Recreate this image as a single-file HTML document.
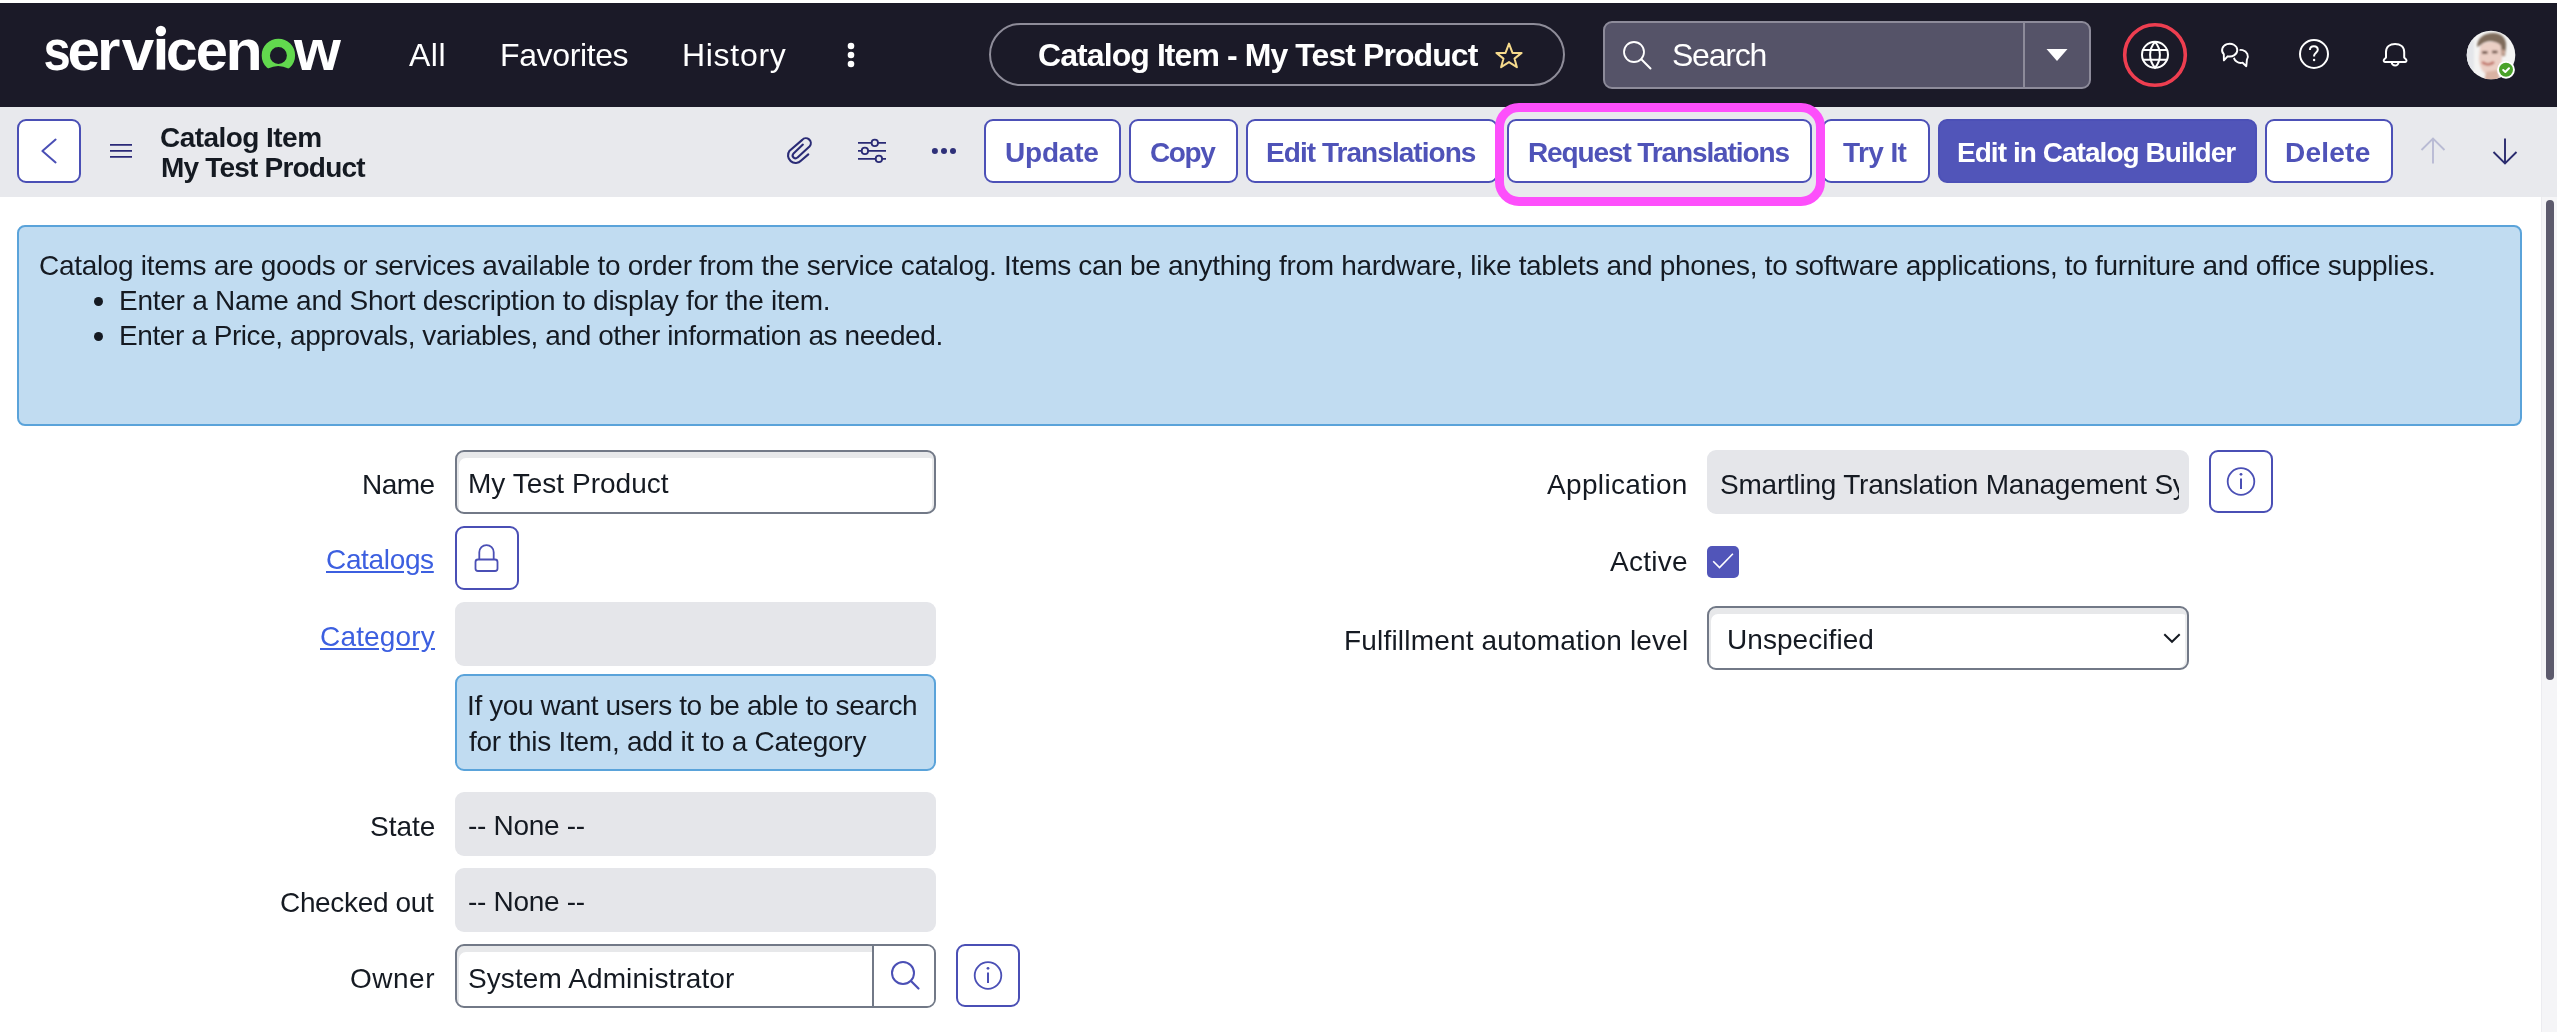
<!DOCTYPE html>
<html><head><meta charset="utf-8"><title>Catalog Item - My Test Product</title>
<style>
*{box-sizing:border-box;margin:0;padding:0}
html,body{width:2557px;height:1032px;overflow:hidden;background:#fff;font-family:"Liberation Sans",sans-serif}
.a{position:absolute}
.t{position:absolute;white-space:nowrap;line-height:1;will-change:transform}
</style></head>
<body>
<div class="a" style="left:0;top:3px;width:2557px;height:104px;background:#1b1a28"></div>
<svg class="a" style="left:0;top:0" width="360" height="100" viewBox="0 0 360 100">
<g font-family="Liberation Sans" font-weight="700" font-size="57" fill="#fff"><text transform="translate(43.58 69.6) scale(0.859 1)">s</text><text transform="translate(67.42 69.6) scale(1.024 1)">e</text><text transform="translate(97.04 69.6) scale(1.053 1)">r</text><text transform="translate(121.77 69.6) scale(1.022 1)">v</text><text transform="translate(166.08 69.6) scale(0.996 1)">c</text><text transform="translate(195.84 69.6) scale(1.014 1)">e</text><text transform="translate(225.39 69.6) scale(1.068 1)">n</text><text transform="translate(294.08 69.6) scale(1.058 1)">w</text></g>
<rect x="156.7" y="38.9" width="8.5" height="30.7" fill="#fff"/><circle cx="160.9" cy="31" r="5.2" fill="#fff"/>
<circle cx="278.4" cy="55.4" r="12.6" fill="none" stroke="#62d84e" stroke-width="8.2"/>
<path d="M260 70 L268 68.6 Q278.2 63.6 288.4 68.6 L297 70 L297 76 L260 76 Z" fill="#1b1a28"/>
</svg>
<svg class="a" style="left:843px;top:40px" width="16" height="30"><circle cx="8" cy="6" r="3.3" fill="#fff"/><circle cx="8" cy="15" r="3.3" fill="#fff"/><circle cx="8" cy="24" r="3.3" fill="#fff"/></svg>
<div class="a" style="left:989px;top:23px;width:576px;height:63px;border:2px solid #8e8c99;border-radius:32px"></div>
<svg class="a" style="left:1485px;top:30px" width="50" height="50" viewBox="1485 30 50 50"><path d="M1509 43.6 L1512.5 52.9 L1521.6 52.9 L1514.5 58.6 L1516.9 67.2 L1509 62.1 L1501.1 67.2 L1503.5 58.6 L1496.4 52.9 L1505.5 52.9 Z" fill="none" stroke="#f6da8c" stroke-width="2" stroke-linejoin="round"/></svg>
<div class="a" style="left:1603px;top:21px;width:488px;height:68px;border:2px solid #8d8b9a;border-radius:9px;background:#555368"></div>
<div class="a" style="left:2023px;top:23px;width:2px;height:64px;background:#8d8b9a"></div>
<svg class="a" style="left:1615px;top:35px" width="45" height="40" viewBox="0 0 45 40"><circle cx="19" cy="17" r="10" fill="none" stroke="#fff" stroke-width="1.8"/><path d="M26.3 24.3 L35.5 33.5" stroke="#fff" stroke-width="2" stroke-linecap="round"/></svg>
<svg class="a" style="left:2040px;top:44px" width="34" height="22"><path d="M6.5 5 L27.5 5 L17 17 Z" fill="#fff"/></svg>
<svg class="a" style="left:2115px;top:15px" width="80" height="80" viewBox="0 0 80 80"><circle cx="40" cy="40" r="30.3" fill="none" stroke="#ee3e50" stroke-width="3.6"/><g fill="none" stroke="#fff" stroke-width="2"><circle cx="40" cy="39.8" r="13"/><path d="M40 26.8 A19.7 19.7 0 0 0 40 52.8 A19.7 19.7 0 0 0 40 26.8"/><path d="M27.8 35 H52.2 M27.8 44.7 H52.2"/></g></svg>
<svg class="a" style="left:2210px;top:30px" width="50" height="50" viewBox="2210 30 50 50"><path d="M2242.6 62.7 L2246.3 66.2 L2246.9 59.65 A7 6.5 0 1 0 2242.6 62.7 Z" fill="none" stroke="#fff" stroke-width="1.9" stroke-linejoin="round"/><path d="M2223.8 54.2 L2223.9 60.4 L2227.6 56.3 A7.6 6.4 0 1 0 2223.8 54.2 Z" fill="#1b1a28" stroke="#1b1a28" stroke-width="4.6" stroke-linejoin="round"/><path d="M2223.8 54.2 L2223.9 60.4 L2227.6 56.3 A7.6 6.4 0 1 0 2223.8 54.2 Z" fill="none" stroke="#fff" stroke-width="1.9" stroke-linejoin="round"/></svg>
<svg class="a" style="left:2294px;top:34px" width="40" height="40" viewBox="0 0 40 40"><circle cx="20" cy="20" r="14" fill="none" stroke="#fff" stroke-width="2"/><path d="M15.9 16 C15.9 13.6 17.7 12.2 19.9 12.2 C22.2 12.2 23.8 13.8 23.8 15.8 C23.8 18.3 20.1 19.2 20.1 21.8 V22.6" fill="none" stroke="#fff" stroke-width="2"/><circle cx="20.1" cy="26" r="1.2" fill="#fff"/></svg>
<svg class="a" style="left:2375px;top:35px" width="40" height="40" viewBox="2375 35 40 40"><path d="M2386 57.5 V52 C2386 46.8 2390 43.9 2395.1 43.9 C2400.2 43.9 2404.2 46.8 2404.2 52 V57.5 L2406 59.4 C2406.9 60.4 2406.5 61.9 2405.2 61.9 H2385 C2383.7 61.9 2383.3 60.4 2384.2 59.4 Z" fill="none" stroke="#fff" stroke-width="2" stroke-linejoin="round"/><path d="M2391.7 62.2 A3.4 3.4 0 0 0 2398.5 62.2" fill="none" stroke="#fff" stroke-width="2"/></svg>
<svg class="a" style="left:2460px;top:25px" width="65" height="60" viewBox="2460 25 65 60"><defs><clipPath id="av"><circle cx="2491" cy="55" r="24.3"/></clipPath><filter id="bl" x="-20%" y="-20%" width="140%" height="140%"><feGaussianBlur stdDeviation="1.1"/></filter></defs><g clip-path="url(#av)"><rect x="2460" y="25" width="65" height="60" fill="#f4f4f3"/><g filter="url(#bl)"><rect x="2462" y="40" width="12" height="30" fill="#e4e6ea"/><path d="M2477 47 C2477 38 2484 33 2493 33 C2502 33 2507 39 2506 47 L2505 56 L2501 56 L2500 45 C2494 40 2486 40 2481 45 Z" fill="#7f6c5b"/><path d="M2480 47 C2482 41 2498 40 2501 46 L2502 58 C2501 68 2497 75 2490 75 C2483 75 2479 67 2479 58 Z" fill="#ebcfc5"/><path d="M2482 52.5 L2487.5 52.5 M2492 52 L2497.5 52" stroke="#5e4236" stroke-width="2.3"/><path d="M2482 62 Q2488 67 2494 62" stroke="#c07268" stroke-width="2.6" fill="none"/><path d="M2486 72 L2498 70 L2500 82 L2484 82 Z" fill="#d9b3a3"/><path d="M2502 50 C2505 49 2506 53 2503 57 Z" fill="#d8b0a0"/></g></g><circle cx="2506" cy="69.8" r="8.9" fill="#fff"/><circle cx="2506" cy="69.8" r="7" fill="#4aa22a"/><path d="M2503.2 70 L2505.3 72 L2509 68.2" fill="none" stroke="#fff" stroke-width="2" stroke-linecap="round" stroke-linejoin="round"/></svg>
<div class="a" style="left:0;top:107px;width:2557px;height:90px;background:#e8e9ed"></div>
<div class="a" style="left:17px;top:119px;width:64px;height:64px;border:2px solid #4a4fb5;border-radius:9px;background:#fff"></div>
<svg class="a" style="left:17px;top:119px" width="64" height="64"><path d="M38.6 20.6 L25.4 32 L38.6 43.4" fill="none" stroke="#4a4fb5" stroke-width="2" stroke-linecap="round" stroke-linejoin="round"/></svg>
<svg class="a" style="left:105px;top:135px" width="32" height="32"><path d="M5 9.8 H27 M5 15.8 H27 M5 21.9 H27" stroke="#2a2978" stroke-width="1.7"/></svg>
<svg class="a" style="left:770px;top:120px" width="60" height="60" viewBox="770 120 60 60"><path d="M808.3 154.4 L801.2 160.5 A7.6 7.6 0 0 1 789.6 150.7 L802.25 139.85 A4.9 4.9 0 0 1 809.75 146.15 L797.54 157.4 A2.8 2.8 0 0 1 793.26 153.8 L802.9 144.6" fill="none" stroke="#2a2b76" stroke-width="2.1" stroke-linecap="round" stroke-linejoin="round"/></svg>
<svg class="a" style="left:850px;top:130px" width="44" height="40" viewBox="0 0 44 40"><g stroke="#2a2b76" stroke-width="1.8" fill="#e8e9ed"><path d="M8 12.9 H36 M8 20.9 H36 M8 28.9 H36"/><circle cx="24.8" cy="12.9" r="3.2"/><circle cx="14.9" cy="20.9" r="3.2"/><circle cx="28.9" cy="28.9" r="3.2"/></g></svg>
<svg class="a" style="left:925px;top:140px" width="40" height="22"><circle cx="9.9" cy="10.9" r="3" fill="#2e3079"/><circle cx="19" cy="10.9" r="3" fill="#2e3079"/><circle cx="28" cy="10.9" r="3" fill="#2e3079"/></svg>
<div class="a" style="left:984px;top:119px;width:137px;height:64px;border:2px solid #4c50b7;border-radius:9px;background:#fff"></div>
<div class="a" style="left:1129px;top:119px;width:109px;height:64px;border:2px solid #4c50b7;border-radius:9px;background:#fff"></div>
<div class="a" style="left:1246px;top:119px;width:252px;height:64px;border:2px solid #4c50b7;border-radius:9px;background:#fff"></div>
<div class="a" style="left:1507px;top:119px;width:305px;height:64px;border:2px solid #4c50b7;border-radius:9px;background:#fff"></div>
<div class="a" style="left:1822px;top:119px;width:108px;height:64px;border:2px solid #4c50b7;border-radius:9px;background:#fff"></div>
<div class="a" style="left:1938px;top:119px;width:319px;height:64px;border:2px solid #4c50b7;border-radius:9px;background:#5155b9"></div>
<div class="a" style="left:2265px;top:119px;width:128px;height:64px;border:2px solid #4c50b7;border-radius:9px;background:#fff"></div>
<div class="a" style="left:1495px;top:103px;width:330px;height:103px;border:9.5px solid #fd4ffb;border-radius:24px"></div>
<svg class="a" style="left:2416px;top:134px" width="34" height="34"><path d="M17 4.5 V29.5 M5.5 16 L17 4.5 L28.5 16" fill="none" stroke="#b9bbd4" stroke-width="1.9"/></svg>
<svg class="a" style="left:2488px;top:134px" width="34" height="34"><path d="M17 4.5 V29.5 M5.5 18 L17 29.5 L28.5 18" fill="none" stroke="#2a2b6e" stroke-width="1.9"/></svg>
<div class="a" style="left:2541px;top:197px;width:16px;height:835px;background:#f5f5f7;border-left:1px solid #ececf0"></div>
<div class="a" style="left:2546px;top:200px;width:8px;height:480px;background:#5c5a6c;border-radius:4px"></div>
<div class="a" style="left:17px;top:225px;width:2505px;height:201px;border:2px solid #5aa3da;border-radius:8px;background:#c1dcf1"></div>
<div class="a" style="left:93.8px;top:296.8px;width:9.4px;height:9.4px;border-radius:50%;background:#151a22"></div>
<div class="a" style="left:93.8px;top:331.6px;width:9.4px;height:9.4px;border-radius:50%;background:#151a22"></div>
<div class="a" style="left:455px;top:450px;width:481px;height:64px;border:2px solid #727987;border-radius:9px;background:#fff;box-shadow:inset 2px 6px 0 #e7e8ea,inset -2px 0 0 #ebeced"></div>
<div class="a" style="left:455px;top:526px;width:64px;height:64px;border:2px solid #4a4fb5;border-radius:9px;background:#fff"></div>
<svg class="a" style="left:455px;top:526px" width="64" height="64"><g fill="none" stroke="#4a4fb5" stroke-width="1.8"><path d="M24.3 33.5 V26.3 A7.2 7.2 0 0 1 38.7 26.3 V33.5"/><rect x="20.5" y="33.5" width="22" height="11.5" rx="2.5"/></g></svg>
<div class="a" style="left:455px;top:602px;width:481px;height:64px;border-radius:9px;background:#e5e6ea"></div>
<div class="a" style="left:455px;top:674px;width:481px;height:97px;border:2px solid #5aa3da;border-radius:9px;background:#c1dcf1"></div>
<div class="a" style="left:455px;top:792px;width:481px;height:64px;border-radius:9px;background:#e5e6ea"></div>
<div class="a" style="left:455px;top:868px;width:481px;height:64px;border-radius:9px;background:#e5e6ea"></div>
<div class="a" style="left:455px;top:944px;width:481px;height:64px;border:2px solid #727987;border-radius:9px;background:#fff;box-shadow:inset 2px 6px 0 #e7e8ea,inset -2px 0 0 #ebeced"></div>
<div class="a" style="left:872px;top:946px;width:2px;height:60px;background:#727987"></div>
<div class="a" style="left:874px;top:946px;width:60px;height:60px;background:#fff;border-radius:0 7px 7px 0"></div>
<svg class="a" style="left:874px;top:946px" width="60" height="60"><circle cx="29" cy="27" r="11" fill="none" stroke="#4a4fb5" stroke-width="2"/><path d="M37 35 L44.5 42.5" stroke="#4a4fb5" stroke-width="2.2" stroke-linecap="round"/></svg>
<div class="a" style="left:956px;top:944px;width:64px;height:63px;border:2px solid #4a4fb5;border-radius:9px;background:#fff"></div><svg class="a" style="left:956px;top:944px" width="64" height="63"><circle cx="32" cy="31.5" r="13.3" fill="none" stroke="#4a4fb5" stroke-width="1.8"/><path d="M32 28.5 V39" stroke="#4a4fb5" stroke-width="2"/><circle cx="32" cy="24.3" r="1.4" fill="#4a4fb5"/></svg>
<div class="a" style="left:1707px;top:450px;width:482px;height:64px;border-radius:9px;background:#e5e6ea"></div>
<div class="a" style="left:2209px;top:450px;width:64px;height:63px;border:2px solid #4a4fb5;border-radius:9px;background:#fff"></div><svg class="a" style="left:2209px;top:450px" width="64" height="63"><circle cx="32" cy="31.5" r="13.3" fill="none" stroke="#4a4fb5" stroke-width="1.8"/><path d="M32 28.5 V39" stroke="#4a4fb5" stroke-width="2"/><circle cx="32" cy="24.3" r="1.4" fill="#4a4fb5"/></svg>
<div class="a" style="left:1707px;top:546px;width:32px;height:32px;border-radius:5px;background:#5155b9"></div>
<svg class="a" style="left:1707px;top:546px" width="32" height="32"><path d="M6.2 15.2 L12.5 21.5 L25.9 7.7" fill="none" stroke="#fff" stroke-width="1.6"/></svg>
<div class="a" style="left:1707px;top:606px;width:482px;height:64px;border:2px solid #727987;border-radius:9px;background:#fff;box-shadow:inset 2px 6px 0 #e7e8ea,inset -2px 0 0 #ebeced"></div>
<svg class="a" style="left:2155px;top:625px" width="32" height="26"><path d="M9.3 9.3 L17 16.8 L24.7 9.3" fill="none" stroke="#151a22" stroke-width="2"/></svg>
<div id="t_all" class="t" style="left:409.00px;top:38.51px;font-size:32px;font-weight:400;color:#ffffff;letter-spacing:0.500px;">All</div>
<div id="t_fav" class="t" style="left:500.00px;top:38.51px;font-size:32px;font-weight:400;color:#ffffff;letter-spacing:-0.375px;">Favorites</div>
<div id="t_hist" class="t" style="left:682.00px;top:38.51px;font-size:32px;font-weight:400;color:#ffffff;letter-spacing:0.700px;">History</div>
<div id="t_title" class="t" style="left:1038.00px;top:38.51px;font-size:32px;font-weight:700;color:#ffffff;letter-spacing:-0.918px;">Catalog Item - My Test Product</div>
<div id="t_search" class="t" style="left:1672.20px;top:39.11px;font-size:32px;font-weight:400;color:#ffffff;letter-spacing:-1.240px;">Search</div>
<div id="t_ci" class="t" style="left:160.40px;top:123.70px;font-size:28px;font-weight:700;color:#151a22;letter-spacing:-0.545px;">Catalog Item</div>
<div id="t_mtp" class="t" style="left:161.20px;top:153.90px;font-size:28px;font-weight:700;color:#151a22;letter-spacing:-0.800px;">My Test Product</div>
<div id="t_update" class="t" style="left:1005.00px;top:139.30px;font-size:28px;font-weight:700;color:#4f53b8;letter-spacing:-0.200px;">Update</div>
<div id="t_copy" class="t" style="left:1150.20px;top:138.50px;font-size:28px;font-weight:700;color:#4f53b8;letter-spacing:-1.399px;">Copy</div>
<div id="t_edtr" class="t" style="left:1266.40px;top:139.30px;font-size:28px;font-weight:700;color:#4f53b8;letter-spacing:-0.949px;">Edit Translations</div>
<div id="t_rqtr" class="t" style="left:1528.20px;top:139.30px;font-size:28px;font-weight:700;color:#4f53b8;letter-spacing:-1.116px;">Request Translations</div>
<div id="t_tryit" class="t" style="left:1843.00px;top:139.30px;font-size:28px;font-weight:700;color:#4f53b8;letter-spacing:-0.600px;">Try It</div>
<div id="t_eicb" class="t" style="left:1957.00px;top:139.30px;font-size:28px;font-weight:700;color:#ffffff;letter-spacing:-0.954px;">Edit in Catalog Builder</div>
<div id="t_delete" class="t" style="left:2285.40px;top:139.30px;font-size:28px;font-weight:700;color:#4f53b8;letter-spacing:0.240px;">Delete</div>
<div id="t_l1" class="t" style="left:38.60px;top:252.30px;font-size:28px;font-weight:400;color:#151a22;letter-spacing:-0.307px;">Catalog items are goods or services available to order from the service catalog. Items can be anything from hardware, like tablets and phones, to software applications, to furniture and office supplies.</div>
<div id="t_b1" class="t" style="left:119.40px;top:286.90px;font-size:28px;font-weight:400;color:#151a22;letter-spacing:-0.262px;">Enter a Name and Short description to display for the item.</div>
<div id="t_b2" class="t" style="left:119.40px;top:322.10px;font-size:28px;font-weight:400;color:#151a22;letter-spacing:-0.423px;">Enter a Price, approvals, variables, and other information as needed.</div>
<div id="t_name" class="t" style="left:361.80px;top:470.50px;font-size:28px;font-weight:400;color:#151a22;letter-spacing:-0.533px;">Name</div>
<div id="t_nameval" class="t" style="left:467.80px;top:470.30px;font-size:28px;font-weight:400;color:#151a22;letter-spacing:0.028px;">My Test Product</div>
<div id="t_catalogs" class="t" style="left:326.20px;top:546.30px;font-size:28px;font-weight:400;color:#3c5fe0;letter-spacing:-0.343px;text-decoration:underline;">Catalogs</div>
<div id="t_category" class="t" style="left:320.00px;top:622.50px;font-size:28px;font-weight:400;color:#3c5fe0;letter-spacing:0.172px;text-decoration:underline;">Category</div>
<div id="t_hint1" class="t" style="left:466.60px;top:691.70px;font-size:28px;font-weight:400;color:#151a22;letter-spacing:-0.400px;">If you want users to be able to search</div>
<div id="t_hint2" class="t" style="left:469.00px;top:728.10px;font-size:28px;font-weight:400;color:#151a22;letter-spacing:-0.259px;">for this Item, add it to a Category</div>
<div id="t_state" class="t" style="left:369.60px;top:813.30px;font-size:28px;font-weight:400;color:#151a22;letter-spacing:0.000px;">State</div>
<div id="t_none1" class="t" style="left:468.40px;top:812.30px;font-size:28px;font-weight:400;color:#151a22;letter-spacing:-0.311px;">-- None --</div>
<div id="t_checked" class="t" style="left:280.00px;top:888.90px;font-size:28px;font-weight:400;color:#151a22;letter-spacing:-0.340px;">Checked out</div>
<div id="t_none2" class="t" style="left:468.40px;top:888.30px;font-size:28px;font-weight:400;color:#151a22;letter-spacing:-0.311px;">-- None --</div>
<div id="t_owner" class="t" style="left:349.60px;top:964.70px;font-size:28px;font-weight:400;color:#151a22;letter-spacing:0.500px;">Owner</div>
<div id="t_sysadm" class="t" style="left:468.40px;top:964.50px;font-size:28px;font-weight:400;color:#151a22;letter-spacing:0.096px;">System Administrator</div>
<div id="t_app" class="t" style="left:1546.60px;top:470.90px;font-size:28px;font-weight:400;color:#151a22;letter-spacing:0.340px;">Application</div>
<div id="t_active" class="t" style="left:1609.60px;top:547.50px;font-size:28px;font-weight:400;color:#151a22;letter-spacing:0.280px;">Active</div>
<div id="t_fulfill" class="t" style="left:1344.00px;top:627.30px;font-size:28px;font-weight:400;color:#151a22;letter-spacing:0.185px;">Fulfillment automation level</div>
<div id="t_unspec" class="t" style="left:1727.20px;top:626.30px;font-size:28px;font-weight:400;color:#151a22;letter-spacing:0.060px;">Unspecified</div>
<div style="position:absolute;left:1709px;top:452px;width:470px;height:60px;overflow:hidden"><div style="position:absolute;left:-1709px;top:-452px;width:2557px;height:1032px"><div id="t_smart" class="t" style="left:1720.20px;top:471.30px;font-size:28px;font-weight:400;color:#151a22;letter-spacing:-0.230px;">Smartling Translation Management System</div></div></div>
</body></html>
